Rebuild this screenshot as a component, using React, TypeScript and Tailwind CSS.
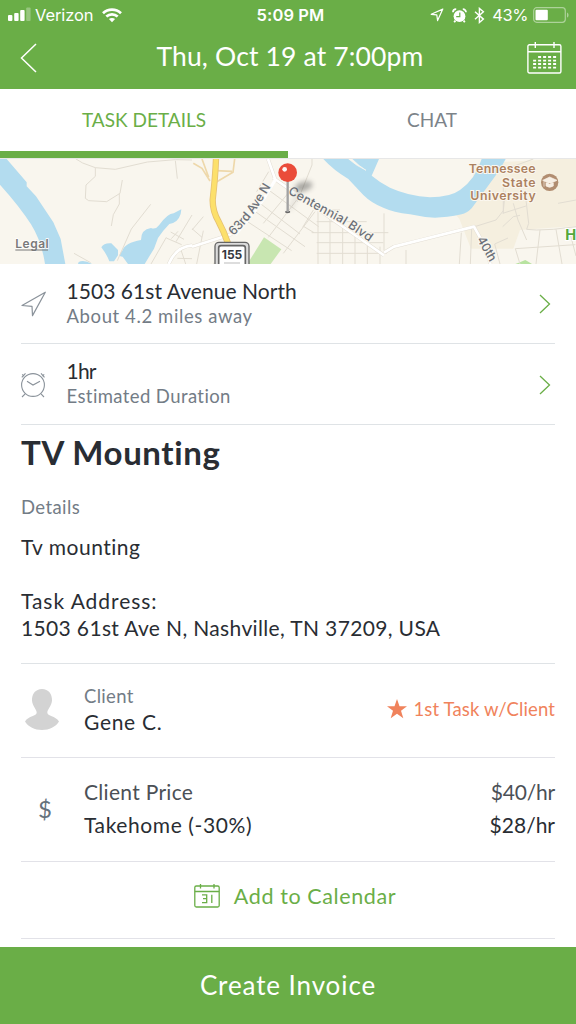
import type { ReactNode } from "react";

const StatusBar = () => {
  return (
    <div className="grid grid-cols-3 items-center h-[30px] pl-2 pr-[7px] font-['Inter',sans-serif] text-[17px]">
      <div className="flex items-center">
        <svg width="23" height="12" viewBox="0 0 23 12" fill="white" overflow="visible">
          <rect x="0" y="6" width="4.4" height="6" rx="1" />
          <rect x="6.2" y="4" width="4.4" height="8" rx="1" />
          <rect x="12.2" y="1" width="4.4" height="11" rx="1" />
          <rect x="18.2" y="-1.5" width="4.4" height="13.5" rx="1" opacity="0.3" />
        </svg>
        <span className="ml-1 text-[16.5px] tracking-[-0.1px]">Verizon</span>
        <svg className="ml-[9px]" width="20" height="15" viewBox="0 0 20 15" fill="none" stroke="white" strokeWidth="2.7">
          <path d="M1 5.2C6 .4 14 .4 19 5.2" />
          <path d="M4.3 8.6c3.3-3 8.1-3 11.4 0" />
          <path d="M6.9 11.1c1.8-1.6 4.400-1.600 6.200 0L10 14.200Z" fill="white" stroke="none" />
        </svg>
      </div>
      <span className="pl-1 text-center font-semibold text-[16.5px] tracking-[0.1px] whitespace-nowrap">5:09 PM</span>
      <div className="flex items-center justify-end">
        <svg width="14" height="14" viewBox="0 0 14 14" fill="none" stroke="white" strokeWidth="1.2" strokeLinejoin="round">
          <path d="M12.8 1.1 1.2 6.3l5.6.6.8 5.7Z" />
        </svg>
        <svg className="ml-2" width="15" height="15" viewBox="0 0 15 15">
          <circle cx="7.5" cy="8.2" r="5.9" fill="white" />
          <path d="M1 4.3C1 2.5 2.3 1.2 4.2 1.2M14 4.3c0-1.8-1.3-3.1-3.2-3.1M3.4 12.6l-1.2 1.6M11.6 12.6l1.2 1.6" stroke="white" strokeWidth="1.8" fill="none" />
          <path d="M7.8 4.6v4H4.2" fill="none" stroke="#6aae47" strokeWidth="1.2" />
        </svg>
        <svg className="ml-[7px]" width="11" height="17" viewBox="0 0 11 17" fill="none" stroke="white" strokeWidth="1.4">
          <path d="m1 4.700 8.400 7.400-4 3.400V1.400l4 3.400L1 12.200" />
        </svg>
        <span className="ml-[7px] text-[16.500px] tracking-[-0.4px]">43%</span>
        <svg className="ml-[5px]" width="36" height="16" viewBox="0 0 36 16">
          <rect x="0.7" y="0.7" width="31.6" height="14.6" rx="3" fill="none" stroke="white" strokeWidth="1.2" opacity="0.45" />
          <rect x="2.5" y="2.7" width="12.3" height="10.6" rx="1" fill="white" />
          <path d="M34 5.400c2 .8 2 4.400 0 5.200Z" fill="white" opacity="0.45" />
        </svg>
      </div>
    </div>
  );
};

const CalendarIcon = () => {
  return (
    <svg width="35" height="32" viewBox="0 0 35 32" fill="none" stroke="white" strokeWidth="1.4">
      <rect x="0.9" y="2.8" width="33" height="28.2" rx="1.5" />
      <path d="M.9 9.700h33M8.300 0v6M27 0v6" />
      <path d="M11.100 15h19M6.100 18.600h24M6.100 22h24M6.100 25.600h24" strokeWidth="1.8" strokeDasharray="3 2" />
    </svg>
  );
};

const TaskMap = () => {
  return (
    <svg className="block w-full h-[105px]" viewBox="0 27 1728 315">
      <rect y="27" width="1728" height="315" fill="#f9f6ee" />
      <path d="M1600 27h128v215l-170 6v48h-185 -30l-35-90-18-20 0-40 60-65v-40Z" transform="translate(70 0)" fill="#f5efdf" />
      <path d="M1540 296l20-56 168-12v114h-188Z" fill="#f9f6ee" />
      <path d="M792 262l52 36-32 44h-70Z" fill="#c8e6b1" />
      <path d="m1556 338 20-8 20 12h-50Z" fill="#b8e3a0" />

      <g fill="#b3dcef">
        <path d="M0 27h20l60 70 0 12 28 30 52 78 22 50 14 75h-61q-10-68-42-119T0 104Z" />
        <path d="M304 292q8-14 30-12l20 20 0 16-12 18h-14q-6-18-24-42Z" />
        <path d="M367 302q8-24 56-32 0-32 30-36 14 6 24-8 26-36 44-36l23-12-2 14q-8 26-34 30-18 18-34 42l-12 32-28 46h-50l-16-22q-18 0-1-18Z" />
        <path d="M236 336q16-8 40 6h-42Z" />
        <path d="M970 27H1137L1115 77Q1140 98 1170 113Q1225 138 1290 142Q1350 142 1380 120Q1425 90 1445 27H1517Q1500 60 1470 100L1415 175Q1400 190 1385 193Q1340 203 1305 203Q1270 202 1230 193Q1180 187 1150 173Q1115 160 1090 135L1045 87Q1000 60 970 27Z" />
      </g>
      <path d="M1046 27q22 20 52 34-20-12-42-34Z" fill="#f9f6ee" stroke="#f9f6ee" strokeWidth="2" />

      <g fill="none" stroke="#e2ddd2" strokeWidth="3">
        <path d="m228 27 20 12 38 14 60 5 96-22 84-7 50 1M286 53v26l-28 26-2 40 10 7 54 3 40-25 7-40M358 130v32l-18 32-6 34M526 32l6 54M452 163l-58 74-42 95M222 310l50 28M499 262l-46 80M576 195l-48 80M499 264l46 20M512 246l40 22M534 244l-20 22M543 300l14 42M576 326l-44-1" />
        <path d="m576 236 30 26M590 342l20-100M610 200l-34 40M640 340l70-12M864 130 790 220M890 150 805 262M945 185 850 310M806 120l150 110M780 160l120 92M745 170l170 120M735 210l140 92M806 65l-36 60M936 27v18l-44 110M940 180l-32 52M912 230l30 18" />
        <path d="M950 180h70M950 215h150M935 248h230M950 278h200M950 310h210M954 180v162M990 190v152M1028 200v142M1065 230v112M1102 250v92M1140 290v52" />
        <path d="M1152 190v110M1384 248l-6 94M1415 237l-4 105M1218 300v42M1424 230l64-20 22-28 6-60M1508 190l70-22M1540 160l14 50 26 60M1578 150l8 70-6 18M1580 238l30 2 50-2 68-8M1508 230l32-30 20-4M1500 342l-16-60 40-18M1560 342l-14-46 180-12M1620 240l-12 102M1668 238l18 104M1706 234l22 84M1674 160l54-10M1510 60l90-33M1510 100v90" />
      </g>

      <g fill="none" stroke="#e4dfd5" strokeWidth="11" strokeLinejoin="round">
        <path d="M576 286q-48 4-70 56M576 290l120-38M804 27l22 62M820 84l332 232M1152 308l30-18 240-60 20 36 30 76" />
      </g>
      <g fill="none" stroke="white" strokeWidth="8" strokeLinejoin="round">
        <path d="M576 286q-48 4-70 56M576 290l120-38M804 27l22 62M820 84l332 232M1152 308l30-18 240-60 20 36 30 76" />
      </g>
      <path d="M826 89q-50 90-120 165" fill="none" stroke="white" strokeWidth="9" />

      <g fill="none" stroke="#eed8aa" strokeWidth="5">
        <path d="m580 40 26 15 24 38M704 27l-5 40-56 33M606 27l20 55M648 62l48 2" />
      </g>
      <path d="M648 27Q646 80 638 150Q638 185 656 215Q672 245 684 280" fill="none" stroke="#e6c273" strokeWidth="19" />
      <path d="M648 27Q646 80 638 150Q638 185 656 215Q672 245 684 280" fill="none" stroke="#fce06b" strokeWidth="14" />

      <g stroke="#666" fill="white">
        <rect x="645" y="277" width="102" height="90" rx="12" fill="#ddd" strokeWidth="4" />
        <rect x="656" y="287" width="80" height="80" rx="7" strokeWidth="5" />
      </g>
      <text x="696" y="327" textAnchor="middle" fontSize="36" fontWeight="700" fill="#34383e" className="font-['Inter']">155</text>
      <path d="M672 339h48" stroke="#bbb" strokeWidth="3" />

      <g className="font-['Inter']" fill="#6c7078" stroke="#f9f6ee" strokeWidth="7" paintOrder="stroke" fontSize="37" fontWeight="500">
        <path id="avenue" d="M700 258Q745 215 768 180T822 94" stroke="none" fill="none" />
        <path id="boulevard" d="M862 130Q960 186 1006 210T1160 314" stroke="none" fill="none" />
        <text textLength="187" lengthAdjust="spacingAndGlyphs">
          <textPath href="#avenue" textLength="187">63rd Ave N</textPath>
        </text>
        <text>
          <textPath href="#boulevard" textLength="286">Centennial Blvd</textPath>
        </text>
        <text transform="translate(1430 268) rotate(60)" textLength="80">40th</text>
      </g>
      <text x="46" y="294" textLength="100" fontSize="36" fontWeight="600" fill="#797979" stroke="white" strokeWidth="4" paintOrder="stroke" className="font-['Inter']">Legal</text>
      <path d="M46 300h98" stroke="#797979" strokeWidth="3" />

      <g className="font-['Inter']" fontSize="37" fontWeight="600" textAnchor="end" fill="#ac8160" stroke="#fbf7ef" strokeWidth="6" paintOrder="stroke">
        <text x="1607" y="69" textLength="201">Tennessee</text>
        <text x="1607" y="110" textLength="101">State</text>
        <text x="1607" y="151" textLength="196">University</text>
      </g>
      <circle cx="1649" cy="97" r="26" fill="#b18d70" />
      <path d="m1628 91 21-10 22 10-22 11ZM1638 99v9q11 8 22 0v-9M1632 94v16" fill="#f7efe4" stroke="#f7efe4" strokeWidth="2" />
      <text x="1696" y="269" fontSize="44" fontWeight="700" fill="#55a83c" stroke="white" strokeWidth="6" paintOrder="stroke" className="font-['Inter']">H</text>

      <defs>
        <filter id="soft" x="-50%" y="-50%" width="200%" height="200%">
          <feGaussianBlur stdDeviation="8" />
        </filter>
      </defs>
      <path d="M868 180 905 112" stroke="#555" strokeWidth="8" opacity="0.2" filter="url(#soft)" />
      <ellipse cx="911" cy="109" rx="27" ry="14" transform="rotate(-15 911 109)" fill="#444" opacity="0.42" filter="url(#soft)" />
      <ellipse cx="863" cy="186" rx="8" ry="3.5" fill="#666" />
      <path d="M863 90v96" stroke="#a2a2a2" strokeWidth="7" />
      <circle cx="863" cy="68" r="28" fill="#ea4c3a" />
      <circle cx="854" cy="58" r="7" fill="white" opacity="0.95" />
    </svg>
  );
};

const Chevron = () => {
  return (
    <svg width="12" height="20" viewBox="0 0 12 20" fill="none" stroke="#6aae47" strokeWidth="1.3">
      <path d="m1 1 9.500 9L1 19" />
    </svg>
  );
};

const InfoRow = ({ icon, title, subtitle }: { icon: ReactNode; title: ReactNode; subtitle: ReactNode }) => {
  return (
    <div className="flex items-center h-[80.5px] border-b border-[#dfe3e6]">
      <div className="w-[45.5px] shrink-0 pt-0.5">{icon}</div>
      <div className="grow">
        <div className="h-[26px] text-[21px] leading-[26px] whitespace-nowrap">{title}</div>
        <div className="h-[25px] text-[18.5px] leading-[25px] text-[#737c86] whitespace-nowrap">{subtitle}</div>
      </div>
      <div className="mr-1 pt-0.5">
        <Chevron />
      </div>
    </div>
  );
};

export default function App() {
  return (
    <div className="flex flex-col w-[576px] h-[1024px] bg-white font-['Lato',sans-serif] text-[#292d33]">
      <header className="h-[89px] bg-[#6aae47] text-white">
        <StatusBar />
        <div className="flex items-center justify-between h-[55px] pl-5 pr-[14px]">
          <svg width="17" height="30" viewBox="0 0 17 30" fill="none" stroke="white" strokeWidth="1.5">
            <path d="M16 1 1.500 15 16 29" />
          </svg>
          <h1 className="ml-4 pb-[3px] text-[26.5px] leading-none tracking-[0.15px]">Thu, Oct 19 at 7:00pm</h1>
          <CalendarIcon />
        </div>
      </header>

      <nav className="grid grid-cols-2 h-[70px] border-b border-[#e7e7e7] text-center text-[19px] leading-[61px]">
        <div className="h-[69px] border-b-[7px] border-[#6aae47] text-[#6aae47]">TASK DETAILS</div>
        <div className="text-[#7c8389]">CHAT</div>
      </nav>

      <div className="h-[104.5px] overflow-hidden">
        <TaskMap />
      </div>

      <main className="px-[21px]">
        <InfoRow
          icon={
            <svg width="26" height="26" viewBox="0 0 26 26" fill="none" stroke="#8a929a" strokeWidth="1.2" strokeLinejoin="round">
              <path d="M24.300 1.200 1 14.500l10 .8.5 9.300Z" />
            </svg>
          }
          title={<span className="tracking-[0.05px]">1503 61st Avenue North</span>}
          subtitle={<span className="tracking-[0.6px]">About 4.2 miles away</span>}
        />
        <InfoRow
          icon={
            <svg width="25" height="26" viewBox="0 0 25 26" fill="none" stroke="#8a929a" strokeWidth="1.1">
              <circle cx="12" cy="13" r="11.4" />
              <path d="m6 9.300 6 3.700 7-3.700M.8 5.400l3.700-4M1.200 2.300l1.800 1.800M20 1.400l3.500 4M23.200 2.300l-1.800 1.800M4.200 21.800 1 25M20 21.800l3 3.200" />
            </svg>
          }
          title={<span className="tracking-[-0.8px]">1hr</span>}
          subtitle={<span className="tracking-[0.4px]">Estimated Duration</span>}
        />

        <section className="h-[239px] border-b border-[#dfe3e6]">
          <h2 className="pt-[7px] h-[69px] text-[33px] leading-[41px] font-bold tracking-[0.6px]">TV Mounting</h2>
          <p className="text-[18.5px] leading-[27px] tracking-[0.4px] text-[#737c86]">Details</p>
          <p className="mt-3 text-[21px] leading-[27px] tracking-[0.5px]">Tv mounting</p>
          <p className="mt-[27px] text-[21px] leading-[27px] tracking-[0.95px]">Task Address:</p>
          <p className="text-[21px] leading-[27px] tracking-[0.35px] whitespace-nowrap">1503 61st Ave N, Nashville, TN 37209, USA</p>
        </section>

        <section className="flex items-center h-[94.5px] border-b border-[#e2e2e8]">
          <div className="w-[63px] pl-1">
            <svg width="34" height="42" viewBox="0 0 34 42" fill="#d3d3d3">
              <path d="M17 0C10.500 0 6.800 5 7 11.500c.2 5 4.600 9 4.700 12C11.800 27.500 3.500 26.500 0 32.500c3.500 5.500 9.600 8.500 17 8.500s13.500-3 17-8.500c-3.500-6-11.800-5-11.700-9 .1-3 4.500-7 4.700-12C27.200 5 23.500 0 17 0Z" />
            </svg>
          </div>
          <div className="grow pb-[3px]">
            <div className="text-[18.5px] leading-[26px] tracking-[0.3px] text-[#737c86]">Client</div>
            <div className="text-[21px] leading-[26px] tracking-[0.7px]">Gene C.</div>
          </div>
          <svg className="mb-[3px]" width="20" height="20" viewBox="0 0 20 20" fill="#f0835c">
            <path d="m10 0 2.500 7.300h7.500l-6 4.500 2.300 7.400L10 14.800l-6.300 4.400L6 11.800 0 7.300h7.500Z" />
          </svg>
          <span className="ml-[6px] text-[18.5px] tracking-[0.13px] text-[#f0835c]">1st Task w/Client</span>
        </section>

        <section className="flex items-center h-[103.5px] border-b border-[#e2e2e8]">
          <div className="w-[63px] pl-[17px] text-[24px] text-[#66727c]">$</div>
          <div className="grow pb-0.5 text-[21px] leading-[33px]">
            <div className="flex justify-between text-[#4b5056]">
              <span className="tracking-[0.3px]">Client Price</span>
              <span className="tracking-[-0.2px]">$40/hr</span>
            </div>
            <div className="flex justify-between">
              <span className="tracking-[0.6px]">Takehome (-30%)</span>
              <span>$28/hr</span>
            </div>
          </div>
        </section>

        <section className="flex items-center justify-center h-[77.5px] pl-[14px] pb-2 border-b border-[#e2e2e8] text-[#6aae47]">
          <svg width="26" height="24" viewBox="0 0 26 24" fill="none" stroke="#6aae47" strokeWidth="1.3">
            <rect x="0.8" y="2" width="24.4" height="21" rx="1.5" />
            <path d="M.8 7.500h24.400M6.500 0v4.500M20 0v4.500M8 10.800h4.700v7.800H8M9 14.600h3.700M17.800 10.800v8.200" />
          </svg>
          <span className="ml-[14px] text-[21.5px] tracking-[0.6px]">Add to Calendar</span>
        </section>
      </main>

      <button className="mt-auto h-[77px] bg-[#6aae47] text-white text-[26px] tracking-[0.9px]">Create Invoice</button>
    </div>
  );
}
